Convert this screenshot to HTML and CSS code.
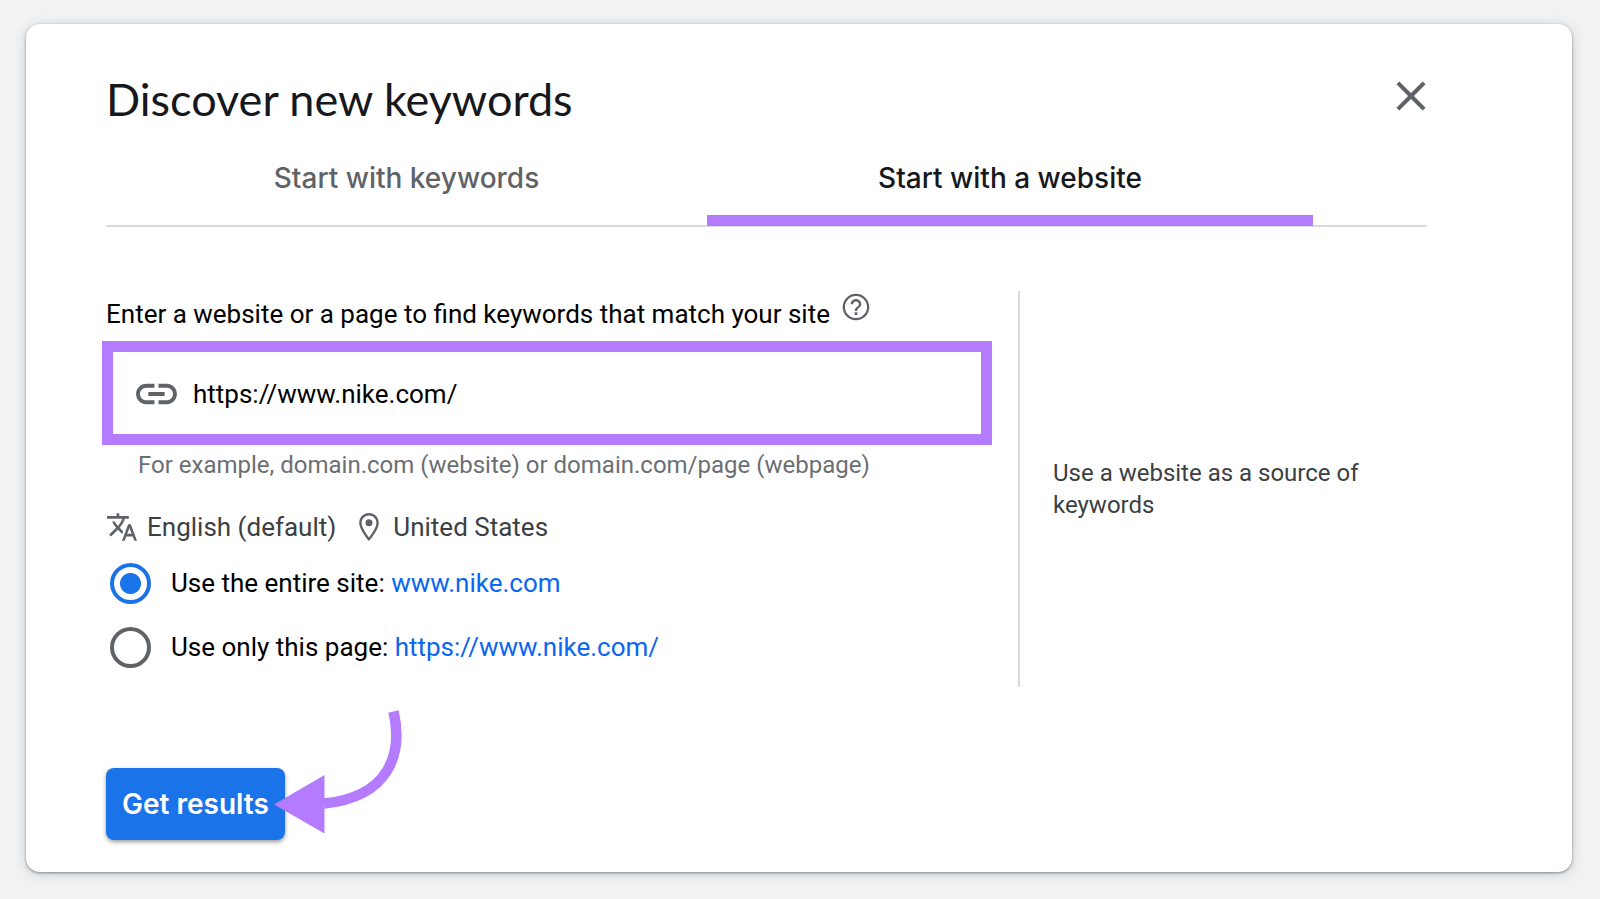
FILE: index.html
```html
<!DOCTYPE html>
<html lang="en">
<head>
<meta charset="utf-8">
<meta name="viewport" content="width=device-width, initial-scale=1">
<title>Discover new keywords</title>
<link rel="stylesheet" href="styles.css">
</head>
<body>
<main class="card">
  <header class="card-header">
    <h1 class="title">Discover new keywords</h1>
    <button class="close" type="button" aria-label="Close">
      <svg viewBox="0 0 24 24" aria-hidden="true"><path d="M19 6.41 17.59 5 12 10.59 6.41 5 5 6.41 10.59 12 5 17.59 6.41 19 12 13.41 17.59 19 19 17.59 13.41 12z"/></svg>
    </button>
  </header>

  <div class="tabs" role="tablist">
    <button class="tab" type="button" role="tab" aria-selected="false">Start with keywords</button>
    <button class="tab tab-active" type="button" role="tab" aria-selected="true">Start with a website</button>
  </div>

  <form class="form">
    <div class="panels">
      <div class="panel-main">
        <div class="label-row">
          <label class="label" for="site">Enter a website or a page to find keywords that match your site</label>
          <button class="help" type="button" aria-label="Help">
            <svg viewBox="0 0 24 24" aria-hidden="true"><path d="M11 18h2v-2h-2v2zm1-16C6.480 2 2 6.480 2 12s4.480 10 10 10 10-4.480 10-10S17.520 2 12 2zm0 18.300c-4.580 0-8.300-3.720-8.300-8.300S7.420 3.700 12 3.700s8.300 3.720 8.300 8.300-3.720 8.300-8.300 8.300zM12 6c-2.210 0-4 1.790-4 4h1.800c0-1.210.99-2.200 2.200-2.200s2.200.99 2.200 2.200c0 2-3.100 1.750-3.100 5h1.800c0-2.250 3.100-2.500 3.100-5 0-2.210-1.790-4-4-4z"/></svg>
          </button>
        </div>
        <div class="field">
          <svg class="field-icon" viewBox="0 0 24 24" aria-hidden="true"><path d="M3.900 12c0-1.710 1.390-3.100 3.100-3.100h4V7H7c-2.760 0-5 2.240-5 5s2.240 5 5 5h4v-1.900H7c-1.710 0-3.100-1.390-3.100-3.100zM8 13h8v-2H8v2zm9-6h-4v1.900h4c1.710 0 3.100 1.390 3.100 3.100s-1.390 3.100-3.100 3.100h-4V17h4c2.760 0 5-2.240 5-5s-2.240-5-5-5z"/></svg>
          <input class="field-input" id="site" type="text" value="https://www.nike.com/" aria-describedby="site-hint">
        </div>
        <p class="hint" id="site-hint">For example, domain.com (website) or domain.com/page (webpage)</p>
        <div class="locale">
          <span class="locale-item">
            <svg class="locale-icon" viewBox="1 2 22 20" aria-hidden="true"><path d="m12.870 15.070-2.540-2.510.030-.030c1.740-1.940 2.980-4.170 3.710-6.530H17V4h-7V2H8v2H1v1.990h11.170C11.500 7.920 10.440 9.750 9 11.350 8.070 10.320 7.300 9.190 6.690 8h-2c.730 1.630 1.730 3.170 2.980 4.560l-5.090 5.020L4 19l5-5 3.110 3.110.760-2.040zM18.500 10h-2L12 22h2l1.120-3h4.750L21 22h2l-4.500-12zm-2.620 7 1.620-4.330L19.120 17h-3.240z"/></svg>
            English (default)
          </span>
          <span class="locale-item">
            <svg class="locale-pin" viewBox="5 2 14 20" aria-hidden="true"><path d="M12 2C8.130 2 5 5.130 5 9c0 5.250 7 13 7 13s7-7.750 7-13c0-3.870-3.130-7-7-7zM6.700 9c0-2.930 2.370-5.300 5.300-5.300s5.300 2.370 5.300 5.300c0 2.880-2.880 7.590-5.300 10.500C9.610 16.610 6.700 11.850 6.700 9z"/><circle cx="12" cy="9" r="2.500"/></svg>
            United States
          </span>
        </div>
        <div class="option">
          <input class="radio" type="radio" name="scope" id="scope-site" checked>
          <label for="scope-site">Use the entire site: <a class="link" href="#">www.nike.com</a></label>
        </div>
        <div class="option">
          <input class="radio" type="radio" name="scope" id="scope-page">
          <label for="scope-page">Use only this page: <a class="link" href="#">https://www.nike.com/</a></label>
        </div>
      </div>
      <aside class="panel-side">
        <p class="note">Use a website as a source of keywords</p>
      </aside>
    </div>

    <div class="actions">
      <button class="submit" type="button">Get results</button>
      <svg class="arrow" viewBox="0 0 130 124" aria-hidden="true"><path d="M119.500 1.500C129 43 116 87 50 93.500" fill="none" stroke="#b57bff" stroke-width="10.500"/><path d="M0 94.500 50.500 65v58.500z" fill="#b57bff"/></svg>
    </div>
  </form>
</main>
</body>
</html>
```
FILE: styles.css
```css
* {
  box-sizing: border-box;
}

body {
  margin: 0;
  padding: 24px 28px 27px 26px;
  background: #f1f2f4;
  color: #000;
  font-family: Roboto, "Liberation Sans", sans-serif;
  font-size: 26px;
  line-height: 40px;
}

button,
input {
  margin: 0;
  font: inherit;
  color: inherit;
}

button {
  padding: 0;
  border: 0;
  background: none;
  cursor: pointer;
}

svg {
  display: block;
  flex: none;
  fill: #5f6368;
}

h1,
p {
  margin: 0;
}

.card {
  padding: 47px 145px 32px 80px;
  border-radius: 14px;
  background: #fff;
  box-shadow: 0 1px 3px rgba(0, 0, 0, 0.4), 0 2px 14px rgba(0, 0, 0, 0.14);
}

.card-header {
  display: flex;
  justify-content: space-between;
  align-items: flex-start;
}

.title {
  color: #16181c;
  font-family: Lato, Roboto, sans-serif;
  font-size: 45px;
  font-weight: 400;
  line-height: 56px;
}

.close {
  margin-right: -9px;
}

.close svg {
  width: 50px;
  height: 50px;
}

.tabs {
  display: grid;
  grid-template-columns: 601fr 606fr 114fr;
  margin-top: 26px;
  border-bottom: 2px solid #d8dadf;
}

.tab {
  margin-bottom: -1px;
  padding-bottom: 12px;
  border-bottom: 11px solid transparent;
  color: #5f6368;
  font-family: Inter, Roboto, sans-serif;
  font-size: 28px;
  font-weight: 500;
  line-height: 50px;
}

.tab-active {
  border-bottom-color: #b57bff;
  color: #16181c;
}

.panels {
  display: grid;
  grid-template-columns: 912fr 409fr;
  margin-top: 64px;
}

.panel-main {
  padding: 3px 26px 16px 0;
}

.panel-side {
  display: flex;
  align-items: center;
  padding-left: 33px;
  border-left: 2px solid #d8dadf;
}

.note {
  color: #3c4043;
  font-size: 24px;
  line-height: 32px;
  max-width: 336px;
}

.label-row {
  display: flex;
  align-items: flex-start;
  gap: 10px;
}

.help {
  margin-top: -3px;
}

.help svg {
  width: 32px;
  height: 32px;
}

.field {
  display: flex;
  align-items: center;
  gap: 12px;
  margin: 7px 0 4px -4px;
  padding: 17px 19px 15px;
  border: 11px solid #b57bff;
}

.field-icon {
  width: 49px;
  height: 50px;
}

.field-input {
  flex: 1;
  min-width: 0;
  padding: 0;
  border: 0;
  outline: 0;
  background: transparent;
}

.hint {
  padding-left: 32px;
  color: #6b6f74;
  font-size: 24px;
  line-height: 32px;
}

.locale {
  display: flex;
  gap: 23px;
  margin: 26px 0 12px;
  padding-left: 1px;
  color: #3c4043;
}

.locale-item {
  display: flex;
  align-items: center;
  gap: 10px;
}

.locale-icon {
  width: 30px;
  height: 28px;
}

.locale-pin {
  width: 20px;
  height: 28px;
  margin-right: 4px;
}

.option {
  display: flex;
  align-items: center;
  gap: 20px;
  min-height: 48px;
  padding-left: 4px;
}

.option + .option {
  margin-top: 16px;
}

.radio {
  appearance: none;
  width: 41px;
  height: 41px;
  border: 4px solid #5f6368;
  border-radius: 50%;
}

.radio:checked {
  border-color: #1a73e8;
  background: radial-gradient(circle, #1a73e8 10px, transparent 11px);
}

.link {
  color: #0b66f0;
  text-decoration: none;
}

.actions {
  position: relative;
  margin-top: 81px;
}

.submit {
  display: block;
  padding: 16px;
  border-radius: 8px;
  background: #1a73e8;
  box-shadow: 0 2px 4px rgba(0, 0, 0, 0.4);
  color: #fff;
  font-family: Inter, Roboto, sans-serif;
  font-size: 28px;
  font-weight: 600;
}

.arrow {
  position: absolute;
  left: 168px;
  bottom: 6px;
  width: 130px;
  height: 124px;
}
```
